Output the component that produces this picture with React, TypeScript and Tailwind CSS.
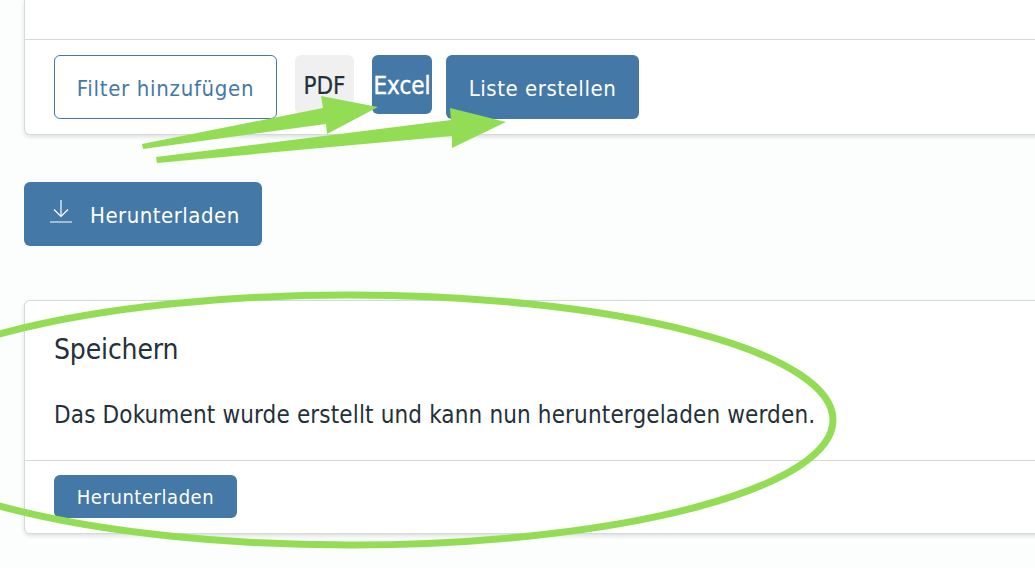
export default function App() {
  return (
    <div className="relative h-[568px] w-[1035px] overflow-hidden bg-[#fbfefd] font-['DejaVu_Sans_Condensed','DejaVu_Sans',sans-serif] text-[#24303a]">
      <div className="flex w-[1100px] flex-col pl-6">
        <section className="h-[135px] rounded-b-md border border-t-0 border-[#d3d9de] bg-white shadow-[0_2px_4px_rgba(0,0,0,0.12)]">
          <div className="h-[40px] border-b border-[#d3d9de]" />
          <div className="flex items-start pl-[29px] pt-[15px]">
            <button className="flex h-[64px] w-[223px] items-center justify-center rounded-md border border-[#4478a7] bg-white pt-[3px] text-[22px] tracking-[0.7px] text-[#4478a7]">
              Filter hinzufügen
            </button>
            <button className="ml-[18px] flex h-[59px] w-[59px] items-center justify-center rounded-md bg-[#f0f0f0] pt-[3px] text-[24px] text-[#24303a] [-webkit-text-stroke:0.2px_#24303a]">
              PDF
            </button>
            <button className="ml-[18px] flex h-[59px] w-[60px] items-center justify-center rounded-md bg-[#4478a7] pt-[3px] text-[24px] text-white [-webkit-text-stroke:0.4px_white]">
              Excel
            </button>
            <button className="ml-[14px] flex h-[64px] w-[193px] items-center justify-center rounded-md bg-[#4478a7] pt-[3px] text-[22px] tracking-[0.55px] text-white">
              Liste erstellen
            </button>
          </div>
        </section>

        <button className="mt-[47px] flex h-[64px] w-[238px] items-center rounded-md bg-[#4478a7] pl-[25px] text-[22px] tracking-[0.5px] text-white">
          <svg width="24" height="24" viewBox="0 0 24 24" fill="none" stroke="currentColor" strokeWidth="1.2" className="mb-[6px] mr-[17px]">
            <path d="M12 1v16M5 10.5l7 7 7-7M1 23h22" />
          </svg>
          <span className="pt-[3px]">Herunterladen</span>
        </button>

        <section className="mt-[54px] h-[234px] rounded-md border border-[#d3d9de] bg-white shadow-[0_2px_4px_rgba(0,0,0,0.12)]">
          <div className="h-[160px] border-b border-[#d3d9de] pl-[29px]">
            <h2 className="pt-[30px] text-[28px] leading-[38px] tracking-[-0.15px]">Speichern</h2>
            <p className="mt-[30px] text-[24px] leading-[32px] tracking-[0.14px]">Das Dokument wurde erstellt und kann nun heruntergeladen werden.</p>
          </div>
          <div className="pl-[29px] pt-[14px]">
            <button className="flex h-[43px] w-[183px] items-center justify-center rounded-md bg-[#4478a7] pt-[1px] text-[20px] tracking-[0.55px] text-white">
              Herunterladen
            </button>
          </div>
        </section>
      </div>

      <svg className="pointer-events-none absolute left-0 top-0" width="1035" height="568" viewBox="0 0 1035 568" fill="none">
        <ellipse cx="350" cy="420" rx="483" ry="125" stroke="#93dd55" strokeWidth="7" />
        <path d="M142 144 L323 108 L321 96 L378 107 L327 134 L326 124 L143 149 Z" fill="#93dd55" />
        <path d="M156 157 L451 120 L450 108 L506 122 L452 148 L452 136 L157 163 Z" fill="#93dd55" />
      </svg>
    </div>
  );
}
